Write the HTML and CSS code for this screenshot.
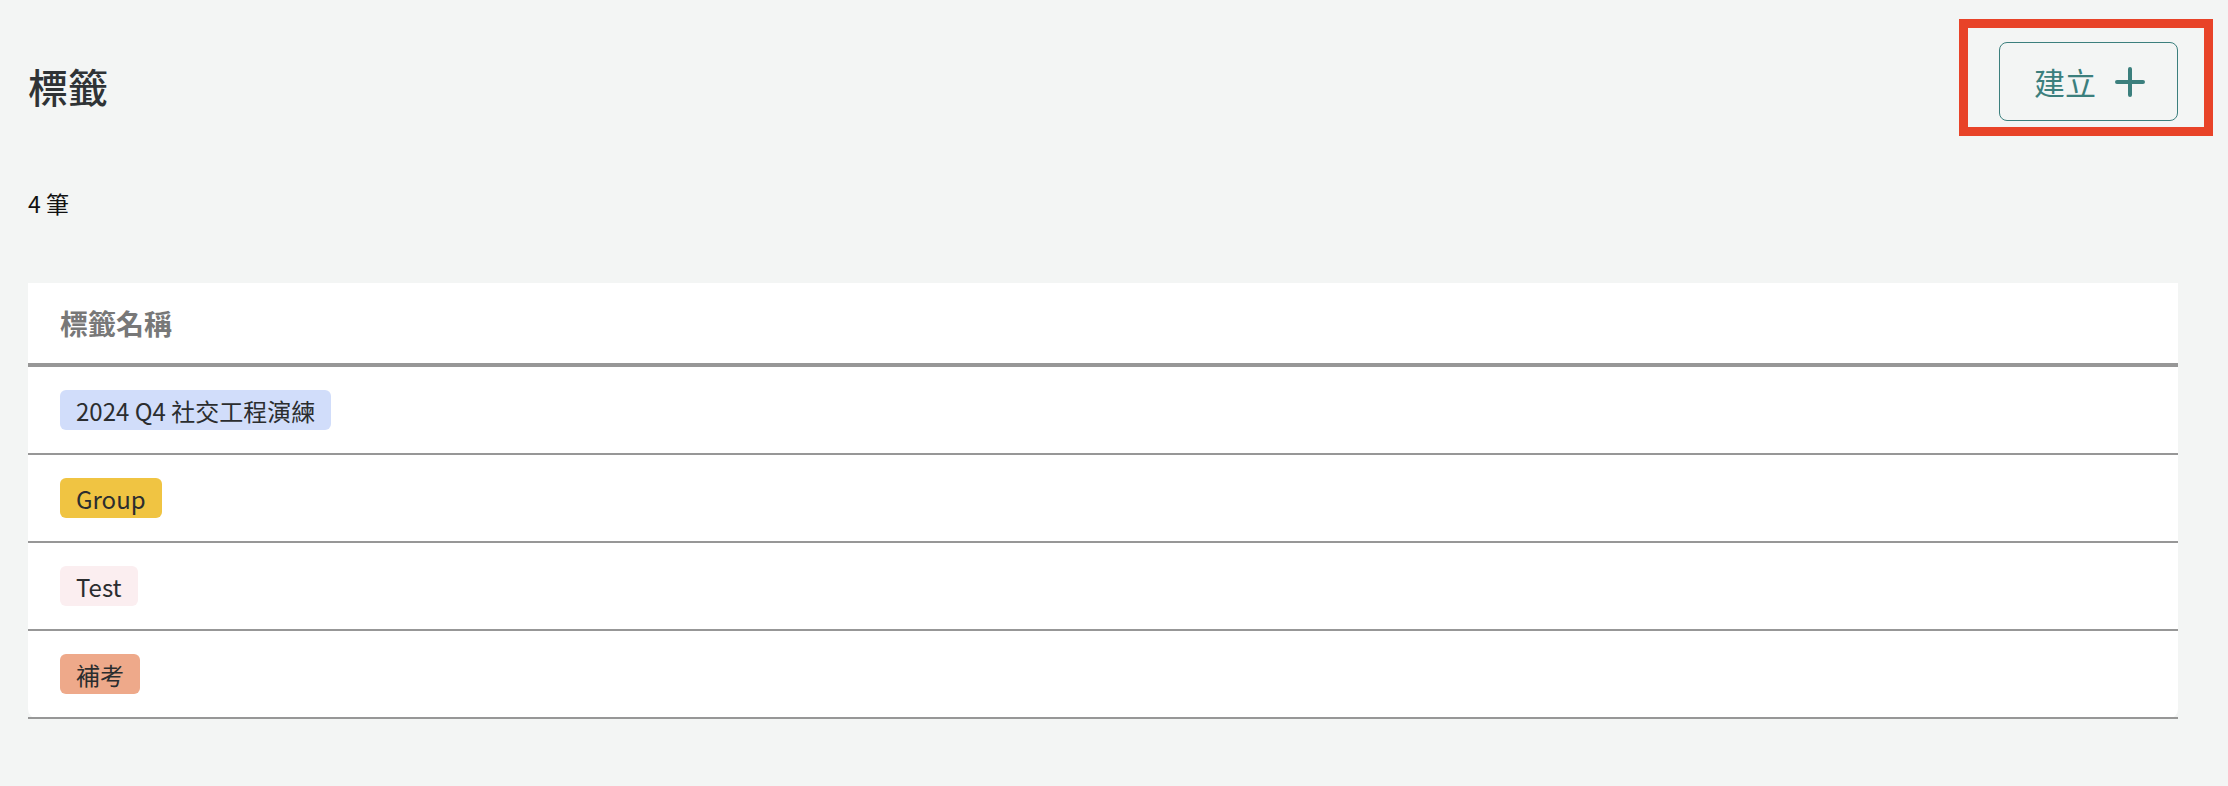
FILE: index.html
```html
<!DOCTYPE html>
<html lang="zh-Hant">
<head>
<meta charset="utf-8">
<title>標籤</title>
<link rel="stylesheet" href="styles.css">
</head>
<body>
<main class="page">
  <header class="page-head">
    <h1 class="title">標籤</h1>
    <div class="action">
      <button class="btn-create" type="button">
        <span>建立</span>
        <svg class="plus" viewBox="0 0 32 32" width="32" height="32" aria-hidden="true">
          <path d="M16 3v26M3 16h26" stroke="currentColor" stroke-width="4" stroke-linecap="round" fill="none"/>
        </svg>
      </button>
      <div class="highlight"></div>
    </div>
  </header>
  <p class="count">4 筆</p>
  <section class="card">
    <div class="row head-row">標籤名稱</div>
    <div class="row"><span class="tag tag-blue">2024 Q4 社交工程演練</span></div>
    <div class="row"><span class="tag tag-yellow">Group</span></div>
    <div class="row"><span class="tag tag-pink">Test</span></div>
    <div class="row"><span class="tag tag-salmon">補考</span></div>
  </section>
</main>
</body>
</html>
```
FILE: styles.css
```css
* { box-sizing: border-box; }
html, body {
  margin: 0;
  background: #f3f5f4;
  font-family: "Noto Sans CJK TC", "Noto Sans", sans-serif;
}
.page {
  padding: 42px 50px 40px 28px;
}
.page-head {
  display: flex;
  justify-content: space-between;
  align-items: flex-start;
}
.title {
  margin: 16px 0 0 0;
  font-size: 40px;
  line-height: 56px;
  font-weight: 500;
  color: #2f3335;
}
.action {
  position: relative;
}
.btn-create {
  display: flex;
  align-items: center;
  gap: 18px;
  height: 79px;
  width: 179px;
  padding: 0 0 0 34px;
  border: 1.5px solid #3b7f7d;
  border-radius: 8px;
  background: transparent;
  color: #3b7f7d;
  font-family: inherit;
  font-size: 31px;
  line-height: 1;
}
.plus { width: 32px; height: 32px; }
.highlight {
  position: absolute;
  left: -40px;
  top: -23px;
  width: 254px;
  height: 117px;
  border: 9px solid #e84328;
  pointer-events: none;
}
.count {
  margin: 66px 0 0 0;
  font-size: 23px;
  line-height: 32px;
  color: #111;
}
.card {
  margin-top: 64px;
  background: #fff;
  border-radius: 0 0 10px 10px;
}
.row {
  display: flex;
  align-items: center;
  height: 88px;
  padding: 0 32px;
  border-bottom: 2px solid #979797;
}
.head-row {
  height: 84px;
  border-bottom-width: 4px;
  font-size: 28px;
  font-weight: 700;
  color: #787878;
}
.tag {
  display: inline-flex;
  align-items: center;
  height: 40px;
  padding: 0 16px;
  border-radius: 6px;
  font-size: 24px;
  color: #2b2d2f;
}
.tag-blue { background: #d1ddfa; }
.tag-yellow { background: #f0c442; }
.tag-pink { background: #fbeef0; }
.tag-salmon { background: #eea98a; }
```
